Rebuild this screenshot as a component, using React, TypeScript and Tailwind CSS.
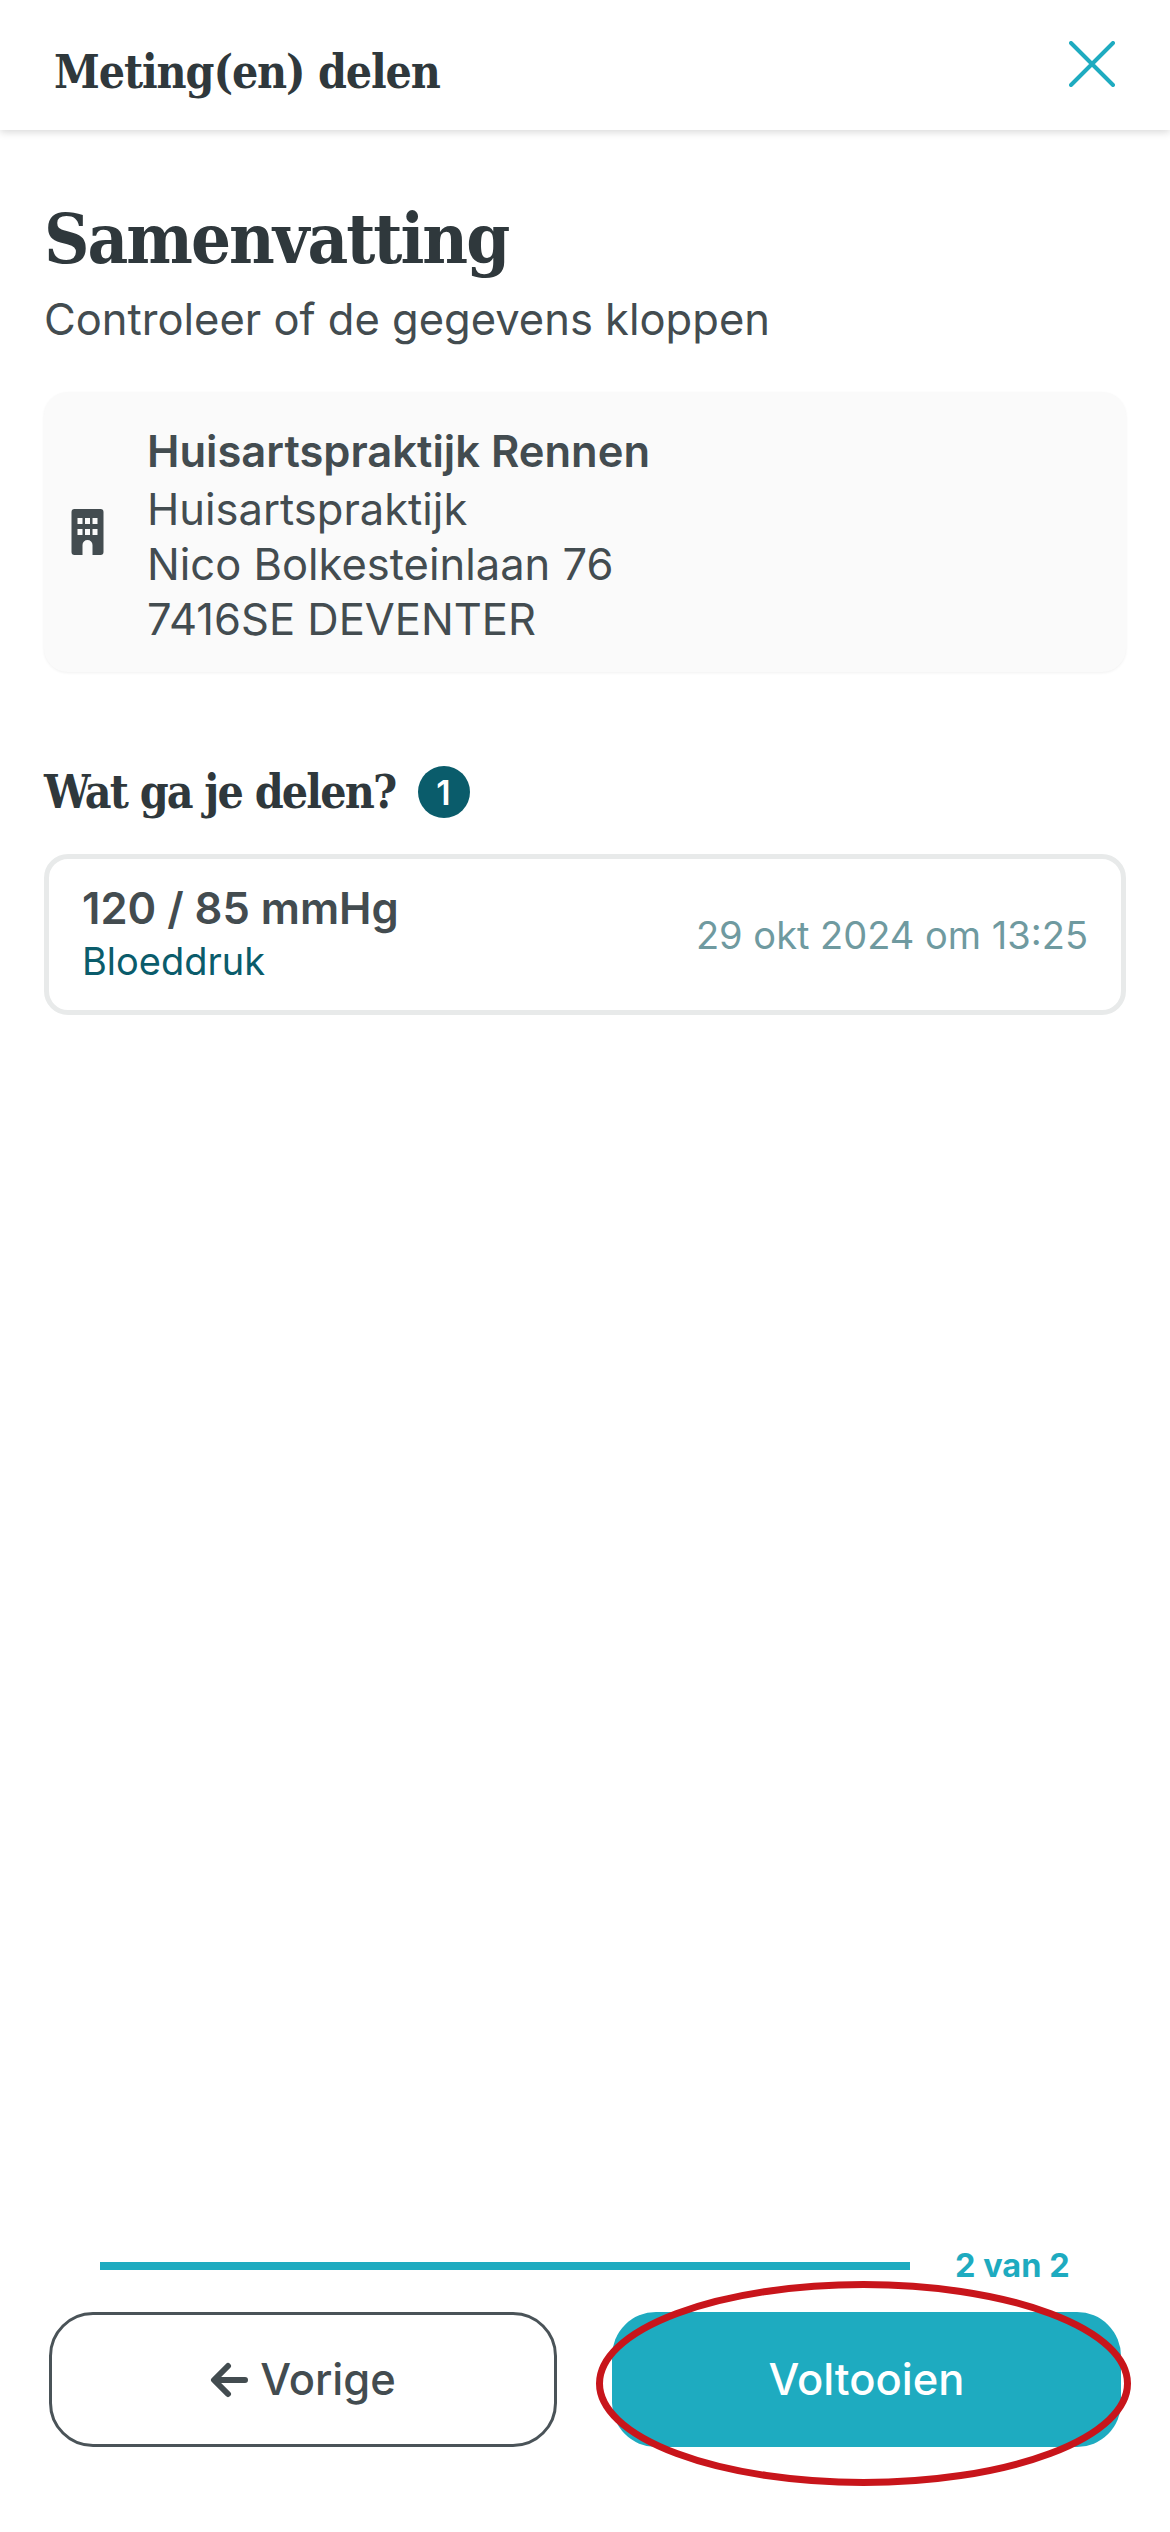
import React from 'react';

const serif = "font-['DejaVu_Serif',serif] [font-stretch:condensed]";

const BuildingIcon = () => (
  <svg viewBox="0 0 32 46" className="w-[33px] h-[46px] shrink-0" fill="#434c50">
    <path
      fillRule="evenodd"
      d="M3 0h26a3 3 0 0 1 3 3v40a3 3 0 0 1-3 3h-8V36a5 5 0 0 0-10 0v10H3a3 3 0 0 1-3-3V3a3 3 0 0 1 3-3zM6 9v6h5V9zm7.500 0v6h5V9zM21 9v6h5V9zM6 20v6h5v-6zm7.500 0v6h5v-6zM21 20v6h5v-6z"
    />
  </svg>
);

const App: React.FC = () => {
  return (
    <div className="relative w-[1170px] h-[2532px] bg-white flex flex-col font-['Inter',sans-serif] overflow-hidden">
      <header className="h-[130px] shrink-0 flex items-center justify-between pl-[54px] pr-[55px] bg-white shadow-[0_2px_8px_rgba(0,0,0,0.16)]">
        <h1 className={`${serif} text-[46px] tracking-[-1.100px] font-bold text-[#2f383c] leading-none mt-[14px]`}>Meting(en) delen</h1>
        <svg viewBox="0 0 46 46" className="w-[46px] h-[46px] mb-[2px]" fill="none" stroke="#1eabc0" strokeWidth="4" strokeLinecap="round">
          <path d="M2 2l42 42M44 2L2 44" />
        </svg>
      </header>

      <main className="flex-1 px-[44px] pt-[63px]">
        <h2 className={`${serif} text-[70px] tracking-[-2px] font-bold text-[#2f383c] leading-[92px]`}>Samenvatting</h2>
        <p className="text-[43.500px] leading-[56px] text-[#434c50] mt-[6px]">Controleer of de gegevens kloppen</p>

        <div className="mt-[45px] h-[280px] rounded-[24px] bg-[#fafafa] shadow-[0_1px_3px_rgba(0,0,0,0.06)] flex items-center pl-[27px] gap-[43px]">
          <BuildingIcon />
          <div className="text-[43.500px] leading-[55px] text-[#434c50] mt-[2px]">
            <p className="font-semibold leading-[62px]">Huisartspraktijk Rennen</p>
            <p>Huisartspraktijk</p>
            <p>Nico Bolkesteinlaan 76</p>
            <p>7416SE DEVENTER</p>
          </div>
        </div>

        <div className="mt-[90px] flex items-center gap-[22px] h-[60px]">
          <h3 className={`${serif} text-[46px] tracking-[-1.800px] font-bold text-[#2f383c] leading-none`}>Wat ga je delen?</h3>
          <span className="w-[52px] h-[52px] rounded-full bg-[#0a5c6b] text-white text-[34px] font-semibold flex items-center justify-center">1</span>
        </div>

        <div className="mt-[32px] h-[161px] rounded-[24px] border-[5px] border-[#e8eaea] flex items-center justify-between pl-[33px] pr-[33px]">
          <div className="-mt-[4px]">
            <p className="text-[43.500px] leading-[56px] font-semibold text-[#434c50]">120 / 85 mmHg</p>
            <p className="text-[38px] leading-[50px] text-[#0a5c6b]">Bloeddruk</p>
          </div>
          <p className="text-[38px] text-[#6f9aa0] mt-[2px]">29 okt 2024 om 13:25</p>
        </div>
      </main>

      <footer className="shrink-0 h-[288px] flex flex-col">
        <div className="flex items-center h-[40px] mt-[2px] pl-[100px]">
          <div className="w-[810px] h-[8px] bg-[#1eabc0]" />
          <span className="ml-[45px] text-[32.500px] font-bold text-[#1eabc0]">2 van 2</span>
        </div>
        <div className="mt-[26px] flex pl-[49px] pr-[49px] gap-[55px] h-[135px]">
          <button className="w-[508px] rounded-[44px] border-[3px] border-[#4a5358] text-[#434c50] text-[43.500px] font-medium flex items-center justify-center gap-[12px]">
            <svg viewBox="0 0 38 36" className="w-[38px] h-[36px]" fill="none" stroke="#434c50" strokeWidth="6" strokeLinecap="round" strokeLinejoin="round">
              <path d="M35 18H5M18 4L4 18l14 14" />
            </svg>
            Vorige
          </button>
          <button className="flex-1 rounded-[44px] bg-[#1eabc0] text-white text-[43.500px] font-medium flex items-center justify-center">Voltooien</button>
        </div>
      </footer>

      {/* annotation drawn over the finish button */}
      <svg viewBox="0 0 535 205" className="absolute left-[596px] top-[2281px] w-[535px] h-[205px]" fill="none">
        <ellipse cx="267.500" cy="102.500" rx="264" ry="99" stroke="#c8151b" strokeWidth="7" />
      </svg>
    </div>
  );
};

export default App;
